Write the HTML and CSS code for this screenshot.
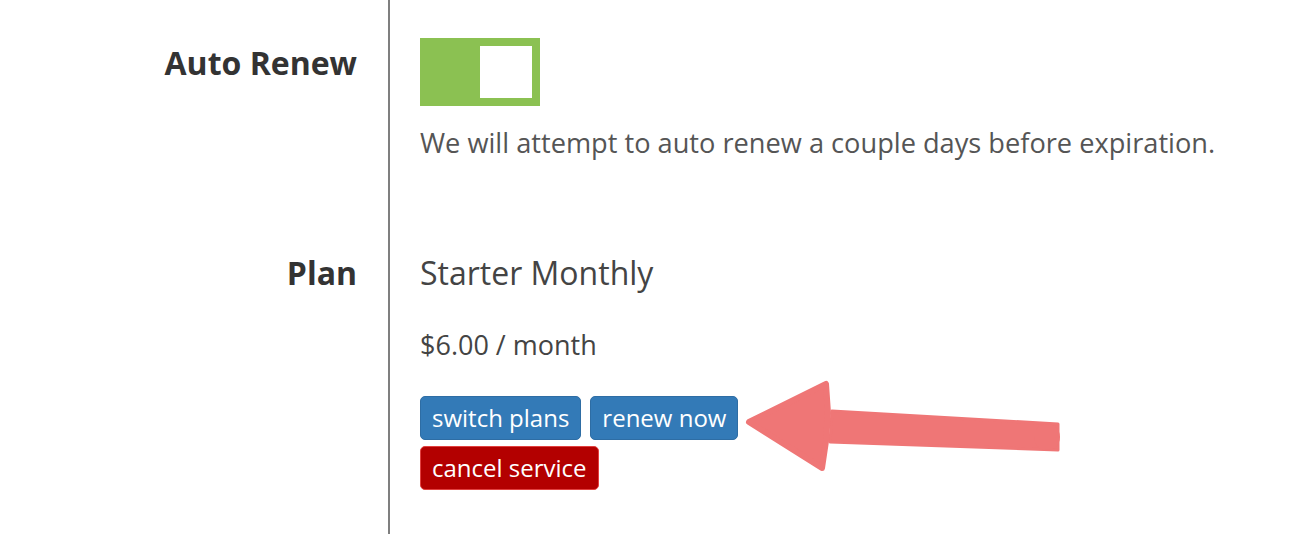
FILE: index.html
```html
<!DOCTYPE html>
<html lang="en">

<head>
  <meta charset="UTF-8">
  <meta name="viewport" content="width=device-width, initial-scale=1.0">
  <title>subscription</title>
  <link rel="stylesheet" href="styles.css">
</head>

<body>
  <div class="settings">
    <div class="label label-first">Auto Renew</div>
    <div class="value value-first">
      <div class="toggle on"><span class="knob"></span></div>
      <p class="help">We will attempt to auto renew a couple days before expiration.</p>
    </div>

    <div class="label">Plan</div>
    <div class="value">
      <p class="plan-name">Starter Monthly</p>
      <p class="plan-price">$6.00 / month</p>
      <div class="actions">
        <button class="btn btn-primary">switch plans</button>
        <button class="btn btn-primary">renew now</button>
      </div>
      <div class="actions">
        <button class="btn btn-danger">cancel service</button>
      </div>
    </div>
  </div>

  <!-- annotation arrow -->
  <svg class="pointer" width="330" height="105" viewBox="0 0 330 105">
    <polygon points="92,36 318,49 318,75 90,67" fill="#ef7676" stroke="#ef7676" stroke-width="3" stroke-linejoin="round" />
    <circle cx="307" cy="62" r="13" fill="#ef7676" />
    <polygon points="9,47 86,9 88,38 86,66 82,93" fill="#ef7676" stroke="#ef7676" stroke-width="6" stroke-linejoin="round" />
  </svg>
</body>

</html>
```

FILE: styles.css
```css
body {
  font-family: 'Open Sans', 'Liberation Sans', sans-serif;
  margin: 0;
  padding: 0;
  background-color: #FFFFFF;
  color: #555555;
  position: relative;
  min-height: 100vh;
  overflow: hidden;
}

.settings {
  display: grid;
  grid-template-columns: 390px 1fr;
  grid-template-rows: auto 1fr;
  min-height: 100vh;
}

.label {
  box-sizing: border-box;
  text-align: right;
  padding-right: 31px;
  border-right: 2px solid #7f7f7f;
  font-size: 32px;
  font-weight: bold;
  line-height: 45px;
  color: #333333;
  padding-top: 89px;
}

.label-first {
  padding-top: 40px;
}

.value {
  padding-left: 30px;
  padding-top: 89px;
}

.value-first {
  padding-top: 38px;
}

.value p {
  margin: 0;
}

/* toggle switch */
.toggle {
  width: 120px;
  height: 68px;
  box-sizing: border-box;
  padding: 8px;
  background-color: #8bc152;
  display: flex;
  justify-content: flex-end;
}

.knob {
  width: 52px;
  height: 52px;
  background-color: #FFFFFF;
}

.help {
  font-size: 27.2px;
  line-height: 36px;
  margin-top: 19px !important;
}

.plan-name {
  font-size: 32px;
  line-height: 45px;
  color: #444444;
}

.plan-price {
  font-size: 27px;
  line-height: 36px;
  margin-top: 32px !important;
  color: #444444;
}

.actions {
  display: flex;
  gap: 9px;
  margin-top: 6px;
}

.plan-price + .actions {
  margin-top: 33px;
}

.btn {
  font-family: inherit;
  font-size: 24px;
  line-height: 34px;
  padding: 4px 11px;
  border-radius: 5px;
  border: 1px solid transparent;
  color: #FFFFFF;
  cursor: pointer;
}

.btn-primary {
  background-color: #337ab7;
  border-color: #2e6da4;
}

.btn-danger {
  background-color: #b30000;
  border-color: #e2403f;
}

.pointer {
  position: absolute;
  left: 740px;
  top: 375px;
}
```
